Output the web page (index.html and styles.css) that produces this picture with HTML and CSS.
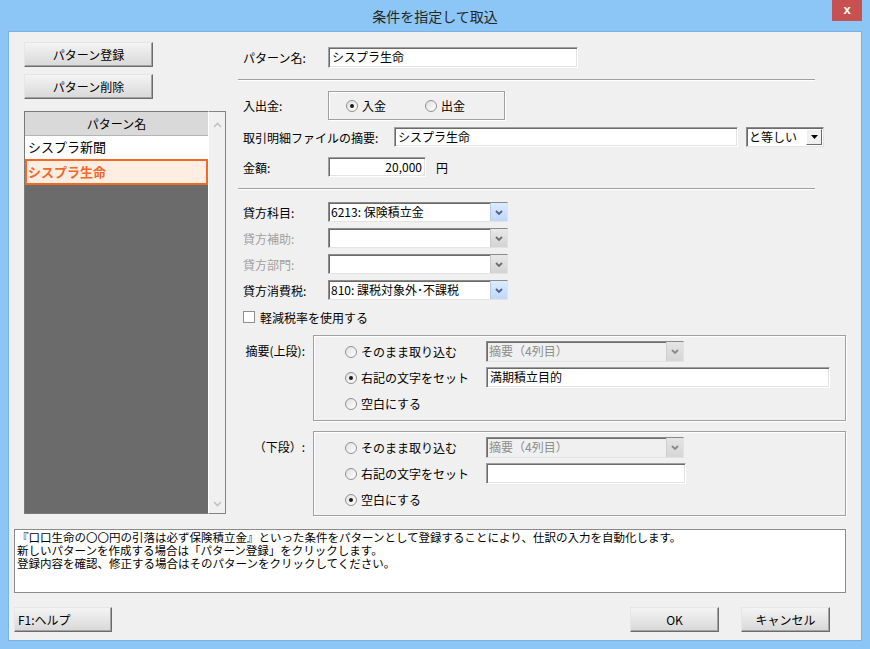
FILE: index.html
```html
<!DOCTYPE html>
<html lang="ja">
<head>
    <meta charset="UTF-8">
    <title>条件を指定して取込</title>
    <link rel="stylesheet" href="styles.css">
</head>
<body>
<div class="window">
    <div class="titlebar">
        <span class="title">条件を指定して取込</span>
        <span class="close">x</span>
    </div>
    <div class="panel">
        <div class="main">
            <!-- pattern list -->
            <div class="left">
                <button class="btn btn-side">パターン登録</button>
                <button class="btn btn-side">パターン削除</button>
                <div class="list">
                    <div class="list-body">
                        <div class="list-head">パターン名</div>
                        <div class="list-item">シスプラ新聞</div>
                        <div class="list-item selected">シスプラ生命</div>
                    </div>
                    <div class="scrollbar">
                        <svg width="9" height="6" viewBox="0 0 9 6"><polyline points="1,5 4.5,1.5 8,5" fill="none" stroke="#c2c2c2" stroke-width="1.6"/></svg>
                        <svg width="9" height="6" viewBox="0 0 9 6"><polyline points="1,1 4.5,4.5 8,1" fill="none" stroke="#c2c2c2" stroke-width="1.6"/></svg>
                    </div>
                </div>
            </div>

            <!-- condition form -->
            <div class="right">
                <div class="row row-name">
                    <span class="lbl w85">パターン名:</span>
                    <div class="field w250">シスプラ生命</div>
                </div>
                <div class="sep"></div>

                <div class="row row-io">
                    <span class="lbl w85">入出金:</span>
                    <div class="group group-io">
                        <span class="opt"><span class="radio checked"></span>入金</span>
                        <span class="opt"><span class="radio"></span>出金</span>
                    </div>
                </div>
                <div class="row row-desc">
                    <span class="lbl w151">取引明細ファイルの摘要:</span>
                    <div class="field w344">シスプラ生命</div>
                    <div class="combo classic w78">
                        <span class="combo-text">と等しい</span>
                        <span class="combo-btn"><svg width="7" height="4" viewBox="0 0 7 4"><polygon points="0,0 7,0 3.5,4" fill="#000"/></svg></span>
                    </div>
                </div>
                <div class="row row-amount">
                    <span class="lbl w85">金額:</span>
                    <div class="field num w98">20,000</div>
                    <span class="unit">円</span>
                </div>
                <div class="sep"></div>

                <div class="row row-acc first">
                    <span class="lbl w85">貸方科目:</span>
                    <div class="combo w180">
                        <span class="combo-text">6213: 保険積立金</span>
                        <span class="combo-btn"><svg width="8" height="5" viewBox="0 0 8 5"><polyline points="1,1 4,4 7,1" fill="none" stroke="#4c6289" stroke-width="1.8"/></svg></span>
                    </div>
                </div>
                <div class="row row-acc">
                    <span class="lbl w85 off">貸方補助:</span>
                    <div class="combo disabled w180">
                        <span class="combo-text"></span>
                        <span class="combo-btn"><svg width="8" height="5" viewBox="0 0 8 5"><polyline points="1,1 4,4 7,1" fill="none" stroke="#6e6e6e" stroke-width="1.8"/></svg></span>
                    </div>
                </div>
                <div class="row row-acc">
                    <span class="lbl w85 off">貸方部門:</span>
                    <div class="combo disabled w180">
                        <span class="combo-text"></span>
                        <span class="combo-btn"><svg width="8" height="5" viewBox="0 0 8 5"><polyline points="1,1 4,4 7,1" fill="none" stroke="#6e6e6e" stroke-width="1.8"/></svg></span>
                    </div>
                </div>
                <div class="row row-acc">
                    <span class="lbl w85">貸方消費税:</span>
                    <div class="combo w180">
                        <span class="combo-text">810: 課税対象外･不課税</span>
                        <span class="combo-btn"><svg width="8" height="5" viewBox="0 0 8 5"><polyline points="1,1 4,4 7,1" fill="none" stroke="#4c6289" stroke-width="1.8"/></svg></span>
                    </div>
                </div>
                <div class="row row-check">
                    <span class="checkbox"></span>軽減税率を使用する
                </div>

                <div class="grp-row grp-top">
                    <span class="grp-lbl">摘要(上段):</span>
                    <div class="group group-desc">
                        <div class="opt-row">
                            <span class="opt w141"><span class="radio"></span>そのまま取り込む</span>
                            <div class="combo gray w198">
                                <span class="combo-text">摘要（4列目）</span>
                                <span class="combo-btn"><svg width="8" height="5" viewBox="0 0 8 5"><polyline points="1,1 4,4 7,1" fill="none" stroke="#8a8a8a" stroke-width="1.8"/></svg></span>
                            </div>
                        </div>
                        <div class="opt-row">
                            <span class="opt w141"><span class="radio checked"></span>右記の文字をセット</span>
                            <div class="field w344">満期積立目的</div>
                        </div>
                        <div class="opt-row">
                            <span class="opt"><span class="radio"></span>空白にする</span>
                        </div>
                    </div>
                </div>

                <div class="grp-row grp-bottom">
                    <span class="grp-lbl">（下段）:</span>
                    <div class="group group-desc">
                        <div class="opt-row">
                            <span class="opt w141"><span class="radio"></span>そのまま取り込む</span>
                            <div class="combo gray w198">
                                <span class="combo-text">摘要（4列目）</span>
                                <span class="combo-btn"><svg width="8" height="5" viewBox="0 0 8 5"><polyline points="1,1 4,4 7,1" fill="none" stroke="#8a8a8a" stroke-width="1.8"/></svg></span>
                            </div>
                        </div>
                        <div class="opt-row">
                            <span class="opt w141"><span class="radio"></span>右記の文字をセット</span>
                            <div class="field w200"></div>
                        </div>
                        <div class="opt-row">
                            <span class="opt"><span class="radio checked"></span>空白にする</span>
                        </div>
                    </div>
                </div>
            </div>
        </div>

        <div class="memo">
            <p>『口口生命の〇〇円の引落は必ず保険積立金』といった条件をパターンとして登録することにより、仕訳の入力を自動化します。</p>
            <p>新しいパターンを作成する場合は「パターン登録」をクリックします。</p>
            <p>登録内容を確認、修正する場合はそのパターンをクリックしてください。</p>
        </div>

        <div class="footer">
            <button class="btn btn-help">F1:ヘルプ</button>
            <button class="btn btn-ok">OK</button>
            <button class="btn btn-cancel">キャンセル</button>
        </div>
    </div>
</div>
</body>
</html>
```

FILE: styles.css
```css
* {
    margin: 0;
    padding: 0;
    box-sizing: border-box;
}
body {
    font-family: "Noto Sans CJK JP", "Liberation Sans", sans-serif;
    font-size: 12px;
    color: #000;
    background: #8cc6f7;
}
.window {
    width: 870px;
    height: 649px;
    padding: 0 8px 8px;
    background: #8cc6f7;
}
.titlebar {
    height: 31px;
    position: relative;
    display: flex;
    align-items: center;
    justify-content: center;
}
.title {
    font-size: 14px;
    color: #262626;
}
.close {
    position: absolute;
    top: 0;
    right: 0;
    width: 30px;
    height: 21px;
    background: #c75050;
    color: #fff;
    font-family: "Liberation Sans", sans-serif;
    font-weight: bold;
    font-size: 13px;
    line-height: 19px;
    text-align: center;
}
.panel {
    height: 610px;
    background: #f0f0f0;
    border: 1px solid #7fb2e2;
}
.main {
    display: flex;
    padding: 10px 15px 0 15px;
}

/* buttons */
.btn {
    font-family: inherit;
    font-size: 12px;
    font-weight: normal;
    color: #000;
    height: 25px;
    background: linear-gradient(#f4f4f4, #d8d8d8);
    border: 1px solid;
    border-color: #e6e6e6 #6b6b6b #6b6b6b #e6e6e6;
    box-shadow: inset -1px -1px 0 #a3a3a3;
    cursor: pointer;
}
.btn-side {
    display: block;
    width: 129px;
    margin-bottom: 7px;
}

/* list */
.left {
    width: 202px;
}
.list {
    display: flex;
    height: 403px;
    margin-top: 12px;
}
.list-body {
    width: 184px;
    background: #6b6b6b;
    border-top: 1px solid #7a7a7a;
    border-left: 1px solid #7a7a7a;
    border-bottom: 1px solid #7a7a7a;
}
.list-head {
    height: 24px;
    line-height: 23px;
    text-align: center;
    background: #d9d9d9;
    border-bottom: 1px solid #b5b5b5;
}
.list-item {
    height: 23px;
    line-height: 22px;
    padding-left: 3px;
    background: #fff;
    font-size: 13px;
}
.list-item.selected {
    height: 26px;
    line-height: 21px;
    padding-left: 1px;
    background: #fdeee1;
    border: 2px solid #f46a25;
    color: #f0682a;
    font-weight: bold;
}
.scrollbar {
    width: 18px;
    display: flex;
    flex-direction: column;
    justify-content: space-between;
    align-items: center;
    padding: 10px 0 6px;
    background: #f0f0f0;
    border: 1px solid #838383;
    border-left: 1px solid #fff;
}

/* form */
.right {
    width: 608px;
    margin-left: 12px;
}
.row {
    display: flex;
    align-items: center;
    padding-left: 5px;
}
.lbl {
    flex-shrink: 0;
    white-space: nowrap;
}
.lbl.off {
    color: #a0a0a0;
}
.w85 { width: 85px; }
.w151 { width: 151px; }
.w78 { width: 78px; }
.w98 { width: 98px; }
.w141 { width: 141px; }
.w180 { width: 180px; }
.w198 { width: 198px; }
.w200 { width: 200px; }
.w250 { width: 250px; }
.w344 { width: 344px; }

.row-name {
    margin-top: 5px;
    height: 21px;
}
.row-name .field {
    height: 21px;
}
.sep {
    width: 577px;
    height: 2px;
    margin-top: 11px;
    border-top: 1px solid #a0a0a0;
    border-bottom: 1px solid #fff;
}
.row-io {
    margin-top: 10px;
    height: 29px;
}
.row-desc {
    margin-top: 7px;
    height: 20px;
}
.row-desc .combo {
    margin-left: 8px;
}
.row-amount {
    margin-top: 10px;
    height: 20px;
}
.unit {
    margin-left: 10px;
}
.row-acc {
    margin-top: 6px;
    height: 20px;
}
.row-acc.first {
    margin-top: 12px;
}
.row-check {
    margin-top: 9px;
    height: 16px;
    gap: 5px;
}

.field {
    height: 20px;
    line-height: 18px;
    padding: 0 3px;
    background: #fff;
    white-space: nowrap;
    border: 1px solid;
    border-color: #a0a0a0 #fff #fff #a0a0a0;
    box-shadow: inset 1px 1px 0 #6b6b6b, inset -1px -1px 0 #e3e3e3;
}
.field.num {
    text-align: right;
}

.combo {
    display: flex;
    height: 20px;
    background: #fff;
    border: 1px solid;
    border-color: #8a8a8a #e3e3e3 #e3e3e3 #8a8a8a;
    box-shadow: inset 1px 1px 0 #6b6b6b;
}
.combo-text {
    flex: 1;
    line-height: 18px;
    padding-left: 2px;
    white-space: nowrap;
    overflow: hidden;
}
.combo-btn {
    width: 17px;
    display: flex;
    align-items: center;
    justify-content: center;
    background: linear-gradient(#dcebfd, #c1d7fa);
    border-left: 1px solid #b8cde9;
}
.combo.disabled .combo-btn {
    background: linear-gradient(#e8e8e8, #d3d3d3);
    border-left: 1px solid #c9c9c9;
}
.combo.gray {
    background: #f0f0f0;
    color: #8d8d8d;
}
.combo.gray .combo-btn {
    background: linear-gradient(#e4e4e4, #d6d6d6);
    border-left: 1px solid #cfcfcf;
}
.combo.classic .combo-btn {
    width: 16px;
    margin: 1px;
    background: #f0f0f0;
    border: 1px solid;
    border-color: #fff #6b6b6b #6b6b6b #fff;
}

.group {
    border: 1px solid #a0a0a0;
    box-shadow: inset 1px 1px 0 #fff, 1px 1px 0 #fff;
}
.group-io {
    width: 177px;
    height: 29px;
    display: flex;
    align-items: center;
    gap: 39px;
    padding-left: 17px;
}
.opt {
    display: flex;
    align-items: center;
    gap: 4px;
    white-space: nowrap;
    flex-shrink: 0;
}
.radio {
    width: 12px;
    height: 12px;
    border-radius: 50%;
    border: 1px solid #909090;
    background: linear-gradient(135deg, #e0e0e0, #fff);
    display: flex;
    align-items: center;
    justify-content: center;
    flex-shrink: 0;
}
.radio.checked::after {
    content: "";
    width: 4px;
    height: 4px;
    border-radius: 50%;
    background: #1a1a1a;
}
.checkbox {
    width: 12px;
    height: 12px;
    border: 1px solid #8e8f8f;
    background: #fff;
}

.grp-row {
    display: flex;
    align-items: flex-start;
    padding-left: 5px;
}
.grp-top {
    margin-top: 10px;
}
.grp-bottom {
    margin-top: 10px;
}
.grp-lbl {
    width: 62px;
    text-align: right;
    padding-top: 7px;
    white-space: nowrap;
}
.group-desc {
    width: 533px;
    margin-left: 8px;
    height: 86px;
    padding: 5px 0 0 31px;
    display: flex;
    flex-direction: column;
    gap: 5px;
}
.grp-bottom .group-desc {
    height: 85px;
}
.opt-row {
    display: flex;
    align-items: center;
    height: 21px;
}
.opt-row .field,
.opt-row .combo {
    height: 21px;
}

/* memo + footer */
.memo {
    height: 64px;
    margin: 13px 15px 0 5px;
    padding: 1px 2px;
    background: #fff;
    border: 1px solid #8b8b8b;
    white-space: nowrap;
}
.memo p {
    height: 13px;
    line-height: 13px;
    font-size: 11.5px;
}
.footer {
    display: flex;
    margin-top: 14px;
    padding: 0 31px 0 5px;
}
.btn-help {
    width: 98px;
    text-align: left;
    padding-left: 3px;
}
.btn-ok {
    width: 89px;
    margin-left: auto;
}
.btn-cancel {
    width: 89px;
    margin-left: 22px;
}
```
